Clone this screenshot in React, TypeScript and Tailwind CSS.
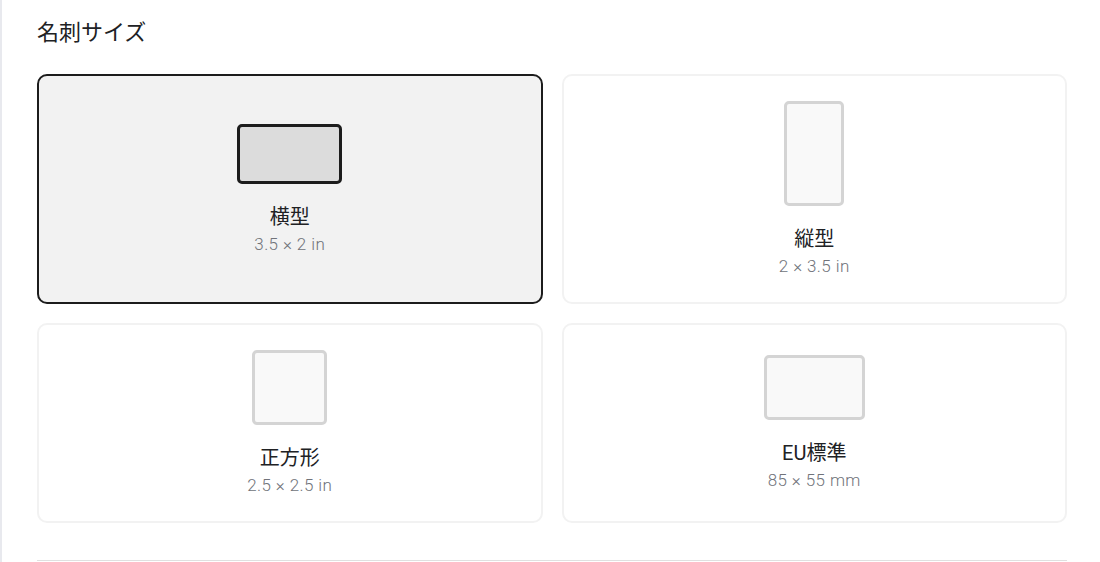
import { useState } from "react";

type CardSize = {
  id: string;
  label: string;
  dims: string;
  w: number;
  h: number;
};

const sizes: CardSize[] = [
  { id: "landscape", label: "横型", dims: "3.5 × 2 in", w: 105, h: 60 },
  { id: "portrait", label: "縦型", dims: "2 × 3.5 in", w: 60, h: 105 },
  { id: "square", label: "正方形", dims: "2.5 × 2.5 in", w: 75, h: 75 },
  { id: "eu", label: "EU標準", dims: "85 × 55 mm", w: 101, h: 65 },
];

export default function App() {
  const [selected, setSelected] = useState("landscape");

  return (
    <div
      className="min-h-screen bg-white border-l-2 border-[#e8e9ee] pl-[35px] pr-[33px] pt-[17px]"
      style={{ fontFamily: 'Roboto, "Noto Sans CJK JP", sans-serif' }}
    >
      {/* Section heading */}
      <h2 className="text-[22px] leading-[32px] text-[#202124] mb-[25px]">名刺サイズ</h2>

      {/* Size options */}
      <div className="grid grid-cols-2 gap-x-[19px] gap-y-[19px]">
        {sizes.map((s) => {
          const active = s.id === selected;
          return (
            <button
              key={s.id}
              onClick={() => setSelected(s.id)}
              className={
                active
                  ? "flex flex-col items-center justify-center rounded-[10px] border-2 border-[#1c1c1c] bg-[#f2f2f2] py-[25px]"
                  : "flex flex-col items-center justify-center rounded-[10px] border-2 border-[#f2f2f2] bg-white py-[25px]"
              }
            >
              <div
                className={
                  active
                    ? "rounded-[5px] border-[3px] border-[#1c1c1c] bg-[#dcdcdc]"
                    : "rounded-[5px] border-[3px] border-[#d4d4d4] bg-[#f9f9f9]"
                }
                style={{ width: s.w, height: s.h }}
              />
              <div className="mt-[20px] text-[20px] leading-[26px] text-[#202124]">{s.label}</div>
              <div className="mt-[3px] text-[17px] leading-[22px] font-light tracking-[0.4px] text-[#70737a]">
                {s.dims}
              </div>
            </button>
          );
        })}
      </div>

      {/* Divider */}
      <div className="mt-[37px] border-t border-[#e0e0e0]" />
    </div>
  );
}
